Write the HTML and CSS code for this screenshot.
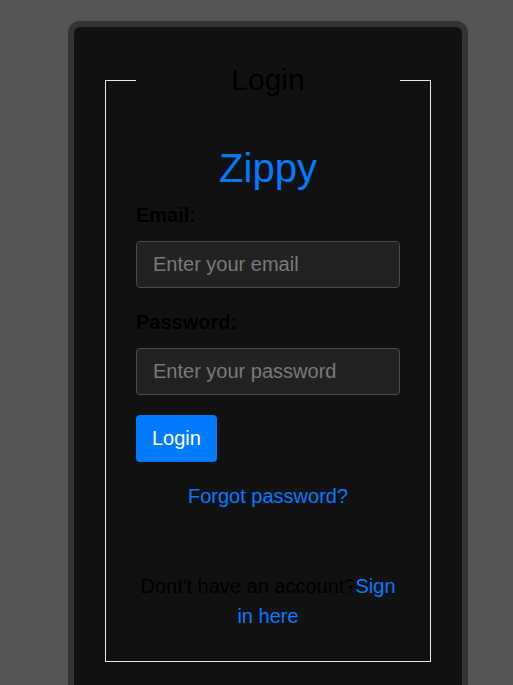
FILE: index.html
```
<!DOCTYPE html>
<html>
<head>
<meta charset="utf-8">
<link rel="stylesheet" href="styles.css">
</head>
<body>
<div class="card">
  <fieldset class="box">
    <legend class="box-title">Login</legend>
    <h1 class="brand">Zippy</h1>
    <form class="form">
      <div class="field">
        <label class="label" for="email">Email:</label>
        <input class="input" id="email" type="email" placeholder="Enter your email">
      </div>
      <div class="field">
        <label class="label" for="password">Password:</label>
        <input class="input" id="password" type="password" placeholder="Enter your password">
      </div>
      <button class="btn" type="button">Login</button>
    </form>
    <p class="forgot"><a class="link" href="#">Forgot password?</a></p>
    <p class="signup">Dont't have an account?<a class="link" href="#">Sign in here</a></p>
  </fieldset>
</div>
</body>
</html>
```

FILE: styles.css
```
html, body {
  margin: 0;
  padding: 0;
  background: #555555;
  font-family: "Liberation Sans", Arial, sans-serif;
  overflow: hidden;
}
.card {
  box-sizing: border-box;
  width: 400px;
  margin: 21px 0 0 68px;
  border: 6px solid #333333;
  border-radius: 12px;
  background: #111111;
  padding: 36px 31px 30px 31px;
}
.box {
  margin: 0;
  border: 1px solid #e6e6e6;
  padding: 0 30px 30px 30px;
  min-width: 0;
}
.box-title {
  width: 100%;
  box-sizing: border-box;
  padding: 0;
  text-align: center;
  font-size: 30px;
  color: #000000;
}
.brand {
  margin: 48px 0 13px 0;
  text-align: center;
  font-size: 40px;
  font-weight: normal;
  color: #007bff;
  line-height: 46px;
}
.form {
  display: flex;
  flex-direction: column;
  align-items: flex-start;
}
.field {
  display: flex;
  flex-direction: column;
  width: 100%;
  margin-bottom: 23px;
}
.field + .field {
  margin-bottom: 20px;
}
.label {
  font-size: 20px;
  line-height: 23px;
  font-weight: bold;
  color: #000000;
  margin-bottom: 14px;
}
.input {
  box-sizing: border-box;
  width: 100%;
  height: 47px;
  padding: 0 16px;
  background: #222222;
  border: 1px solid #4a4a4a;
  border-radius: 4px;
  color: #dddddd;
  font-family: "Liberation Sans", Arial, sans-serif;
  font-size: 20px;
  outline: none;
}
.input::placeholder {
  color: #7a7a7a;
}
.btn {
  height: 47px;
  padding: 0 16px;
  border: none;
  border-radius: 4px;
  background: #007bff;
  color: #ffffff;
  font-family: "Liberation Sans", Arial, sans-serif;
  font-size: 20px;
}
.forgot {
  margin: 23px 0 0 0;
  text-align: center;
  font-size: 20px;
  line-height: 23px;
}
.signup {
  margin: 63px 0 0 0;
  text-align: center;
  font-size: 20px;
  line-height: 30px;
  color: #000000;
}
.link {
  color: #007bff;
  text-decoration: none;
}
```
